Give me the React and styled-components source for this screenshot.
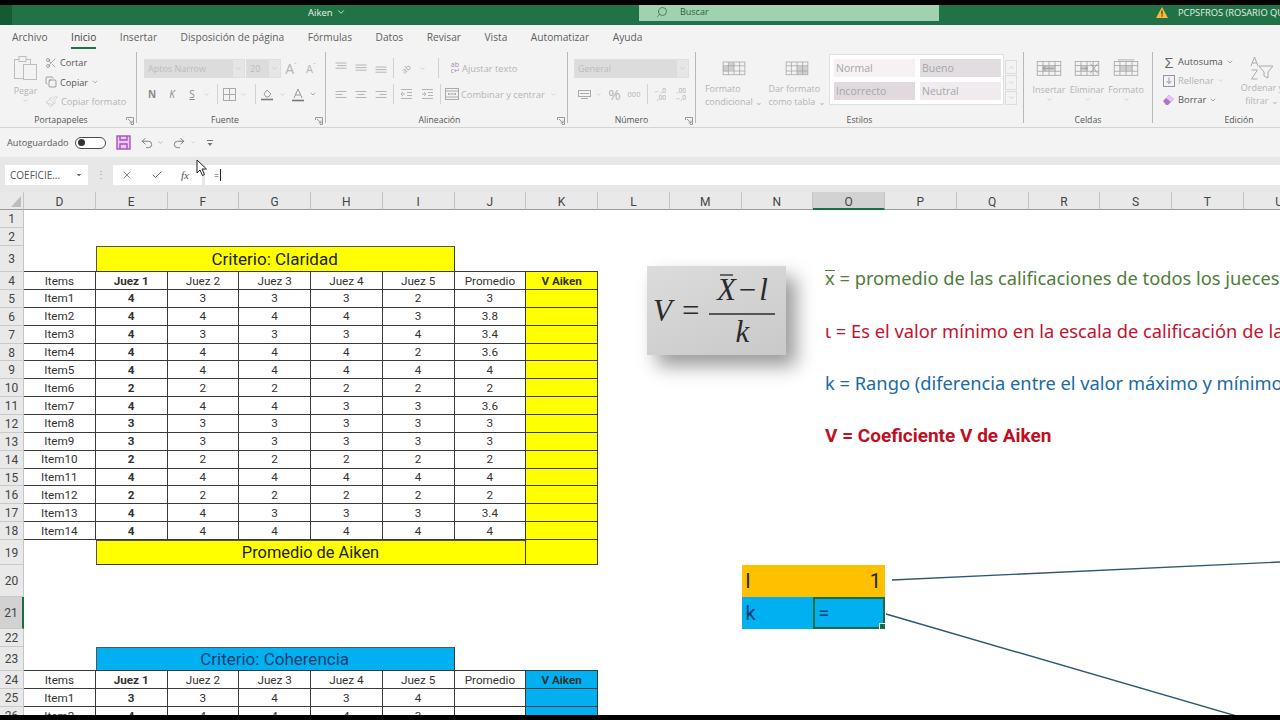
import React from "react";
import styled, { createGlobalStyle } from "styled-components";
import { Scissors, Copy, Paintbrush, Search, ChevronDown, X, Check, Undo2, Redo2 } from "lucide-react";

const Global = createGlobalStyle`
  html, body { margin: 0; padding: 0; background: #000; overflow: hidden; }
  #root { width: 1280px; height: 720px; overflow: hidden; }
  * { box-sizing: border-box; }
`;

const UI = `"Open Sans", "Noto Sans", sans-serif`;
const CELL = `Roboto, "Liberation Sans", sans-serif`;
const DIS = "#b4b4b4";

const Page = styled.div`
  position: relative;
  width: 1280px;
  height: 720px;
  padding: 5px 0;
  background: #000;
  display: flex;
  flex-direction: column;
  overflow: hidden;
  font-family: ${UI};
`;

/* ---------- title bar ---------- */
const TitleBar = styled.header`
  height: 20px;
  flex: none;
  background: #217346;
  display: flex;
  align-items: flex-start;
  color: #fff;
  font-size: 9.5px;
  overflow: hidden;
`;
const TitleCorner = styled.div`
  width: 12px;
  height: 20px;
  flex: none;
  background: #135c33;
`;
const DocName = styled.div`
  width: 627px;
  height: 14px;
  flex: none;
  padding: 0 0 0 296px;
  display: flex;
  align-items: center;
  gap: 3px;
  color: #e6f2ea;
`;
const SearchBox = styled.div`
  width: 300px;
  height: 16px;
  flex: none;
  background: #a0d2b0;
  color: #2f5f44;
  display: flex;
  align-items: center;
  padding: 0 0 3px 17px;
  gap: 12px;
  font-size: 9px;
`;
const Account = styled.div`
  margin-left: 217px;
  display: flex;
  flex: none;
  align-items: center;
  gap: 10px;
  white-space: nowrap;
  color: #e4efe8;
  font-size: 9.3px;
  height: 14px;
`;

/* ---------- tabs ---------- */
const TabBar = styled.nav`
  height: 25px;
  flex: none;
  background: #f3f3f3;
  display: flex;
  padding-left: 12px;
  gap: 23.5px;
  font-size: 10.2px;
  color: #5a5a5a;
`;
const Tab = styled.div`
  height: 22px;
  margin-top: 2px;
  display: flex;
  align-items: center;
  white-space: nowrap;
  border-bottom: 2px solid ${(p) => (p.$active ? "#217346" : "transparent")};
  color: ${(p) => (p.$active ? "#444" : "#5f5f5f")};
`;

/* ---------- ribbon ---------- */
const Ribbon = styled.section`
  height: 78px;
  flex: none;
  background: #f3f3f3;
  display: flex;
  overflow: hidden;
  border-bottom: 1px solid #d4d4d4;
`;
const Group = styled.div`
  position: relative;
  width: ${(p) => p.$w}px;
  flex: none;
  display: flex;
  flex-direction: column;
`;
const GroupBody = styled.div`
  height: 64px;
  flex: none;
  display: flex;
  padding: ${(p) => p.$pt ?? 8}px 0 0 ${(p) => p.$pl ?? 0}px;
  flex-direction: ${(p) => (p.$col ? "column" : "row")};
`;
const GroupLabel = styled.div`
  height: 13px;
  text-align: center;
  font-size: 8.7px;
  line-height: 13px;
  color: #555;
  padding-right: ${(p) => p.$pr ?? 0}px;
  white-space: nowrap;
`;
const Launcher = styled.svg`
  position: absolute;
  right: 2px;
  bottom: 2px;
  width: 8px;
  height: 8px;
`;
const Divider = styled.div`
  width: 1px;
  flex: none;
  margin: 2px 0 4px;
  background: #b8b8b8;
`;
const Row = styled.div`
  display: flex;
  align-items: center;
  height: 20px;
  margin-bottom: ${(p) => p.$mb ?? 0}px;
`;
const Slot = styled.div`
  width: ${(p) => p.$w}px;
  margin-left: ${(p) => p.$ml ?? 0}px;
  flex: none;
  height: 20px;
  display: flex;
  align-items: center;
  justify-content: center;
  color: ${(p) => p.$c ?? DIS};
  font-size: ${(p) => p.$fs ?? 11}px;
  font-weight: ${(p) => p.$fw ?? 400};
  font-style: ${(p) => (p.$it ? "italic" : "normal")};
  text-decoration: ${(p) => (p.$ul ? "underline" : "none")};
  white-space: nowrap;
`;
const SizeHat = styled.span`
  font-size: 7px;
  margin: -5px 0 0 0;
`;
const Sep = styled.div`
  width: ${(p) => p.$w}px;
  height: 20px;
  flex: none;
  display: flex;
  justify-content: center;
  &::before { content: ""; width: 1px; background: #d2d2d2; }
`;
const Select = styled.div`
  width: ${(p) => p.$w}px;
  height: 19px;
  margin-right: ${(p) => p.$mr ?? 0}px;
  flex: none;
  background: #dcdcdc;
  border: 1px solid #dedede;
  color: #bcbcbc;
  font-size: 9px;
  padding-left: 3px;
  display: flex;
  align-items: center;
  justify-content: space-between;
  overflow: hidden;
  white-space: nowrap;
`;
const SelectArrow = styled.span`
  width: 11px;
  height: 19px;
  background: #e6e6e6;
  color: #b0b0b0;
  display: flex;
  align-items: center;
  justify-content: center;
  flex: none;
`;
const Disabled = styled.span`
  color: ${DIS};
  font-size: 9.3px;
  white-space: nowrap;
`;
const StackDigits = styled.div`
  display: flex;
  flex-direction: column;
  align-items: flex-end;
  font-size: 6.5px;
  line-height: 7px;
  color: #aaa;
`;
const WrapGlyph = styled.div`
  display: flex;
  flex-direction: column;
  font-size: 7px;
  line-height: 6px;
  color: #a58ab5;
`;
const SlantGlyph = styled.span`
  font-size: 8px;
  color: #aaa;
  transform: rotate(-40deg);
  display: inline-block;
`;
const PasteCol = styled.div`
  width: 39px;
  margin-left: 6px;
  flex: none;
  display: flex;
  flex-direction: column;
  align-items: center;
  color: ${DIS};
  font-size: 8.8px;
`;
const PasteWord = styled.div`
  margin-top: 4px;
`;
const ClipRow = styled.div`
  height: 19.5px;
  display: flex;
  align-items: center;
  gap: 3px;
  font-size: 9.2px;
  color: ${(p) => (p.$off ? DIS : "#555")};
  white-space: nowrap;
`;
const ClipCol = styled.div`
  display: flex;
  flex-direction: column;
  margin-top: -2px;
`;
const BigBtn = styled.div`
  width: ${(p) => p.$w}px;
  flex: none;
  display: flex;
  flex-direction: column;
  align-items: center;
  color: ${DIS};
  font-size: 9px;
  line-height: 13px;
  white-space: nowrap;
  margin-top: ${(p) => p.$mt ?? 0}px;
`;
const BigIcon = styled.div`
  height: 24px;
  margin-bottom: ${(p) => p.$mb ?? 0}px;
  display: flex;
  align-items: center;
  justify-content: center;
`;
const Gallery = styled.div`
  width: 175px;
  height: 51px;
  margin-left: -1px;
  background: #fff;
  border: 1px solid #dfdfdf;
  padding: 4px;
  display: grid;
  grid-template-columns: 81px 81px;
  grid-template-rows: 18px 18px;
  gap: 5px;
  flex: none;
`;
const StyleCell = styled.div`
  background: ${(p) => p.$bg};
  color: #a9a5a8;
  font-size: 10.5px;
  padding: 0 0 1px 2px;
  display: flex;
  align-items: center;
`;
const GalleryScroll = styled.div`
  width: 12px;
  height: 45px;
  margin: 6px 0 0 1px;
  flex: none;
  display: grid;
  grid-template-rows: 1fr 1fr 1fr;
  gap: 1px;
  color: #b9b9b9;
`;
const ScrollBtn = styled.div`
  border: 1px solid #dcdcdc;
  display: flex;
  align-items: center;
  justify-content: center;
`;
const EditCol = styled.div`
  width: 73px;
  flex: none;
  display: flex;
  flex-direction: column;
  margin-top: -5px;
`;
const EditRow = styled.div`
  height: 19px;
  display: flex;
  align-items: center;
  gap: 3px;
  font-size: 9.4px;
  white-space: nowrap;
  color: ${(p) => (p.$off ? DIS : "#555")};
`;

/* ---------- quick access ---------- */
const Qat = styled.div`
  height: 29px;
  flex: none;
  background: #f3f3f3;
  display: flex;
  align-items: center;
  padding-left: 7px;
  color: #5a5a5a;
  font-size: 9.2px;
`;
const Toggle = styled.div`
  width: 31px;
  height: 12px;
  border: 1px solid #4a4a4a;
  border-radius: 6px;
  margin: 0 10px 0 6px;
  background: #fff;
  display: flex;
  align-items: center;
  padding-left: 2px;
  &::before { content: ""; width: 7px; height: 7px; border-radius: 50%; background: #333; }
`;

/* ---------- formula bar ---------- */
const FormulaBar = styled.div`
  height: 35px;
  flex: none;
  background: #e7e7e7;
  display: flex;
  padding: 8px 0 7px 5px;
  align-items: stretch;
`;
const NameBox = styled.div`
  width: 83px;
  background: #fff;
  color: #555;
  font-size: 10px;
  padding: 0 5px;
  display: flex;
  align-items: center;
  justify-content: space-between;
`;
const Grip = styled.div`
  width: 25px;
  color: #a0a0a0;
  text-align: center;
  font-size: 10px;
  line-height: 19px;
`;
const FxBox = styled.div`
  width: 89px;
  background: #fff;
  display: flex;
  align-items: center;
  padding-left: 8px;
  gap: 18px;
  color: #666;
`;
const FxMark = styled.span`
  font-family: "Liberation Serif", serif;
  font-style: italic;
  font-size: 11px;
  color: #555;
`;
const FormulaInput = styled.div`
  flex: 1;
  margin-left: 3px;
  background: #fff;
  display: flex;
  align-items: center;
  padding-left: 9px;
  font-size: 9px;
  color: #555;
`;
const Caret = styled.span`
  width: 1px;
  height: 12px;
  background: #222;
  margin-left: 1px;
`;

/* ---------- sheet ---------- */
const rowHeights = [18, 18, 26, 18];
for (let i = 0; i < 14; i++) rowHeights.push(17.87);
rowHeights.push(25, 32, 32, 18, 24, 18, 18, 18);

const Sheet = styled.main`
  position: relative;
  flex: 1;
  min-height: 0;
  background: #fff;
  overflow: hidden;
  display: grid;
  grid-template-columns: 24px repeat(18, 71.75px);
  grid-template-rows: 18px ${rowHeights.map((h) => h + "px").join(" ")};
  font-family: ${CELL};
`;
const place = (p) => `
  grid-column: ${p.$c}${p.$cs ? " / span " + p.$cs : ""};
  grid-row: ${p.$r};
`;
const Corner = styled.div`
  grid-column: 1;
  grid-row: 1;
  background: #e9e9e9;
  border-bottom: 1px solid #9a9a9a;
  border-right: 1px solid #c4c4c4;
  display: flex;
  align-items: flex-end;
  justify-content: flex-end;
  padding: 0 2px 2px 0;
`;
const ColHead = styled.div`
  ${place}
  background: ${(p) => (p.$sel ? "#d2d2d2" : "#e9e9e9")};
  border-right: 1px solid #c4c4c4;
  border-bottom: ${(p) => (p.$sel ? "2px solid #1d6b41" : "1px solid #9a9a9a")};
  color: #444;
  font-size: 12px;
  padding-top: 3px;
  display: flex;
  align-items: center;
  justify-content: center;
`;
const RowHead = styled.div`
  ${place}
  background: ${(p) => (p.$sel ? "#d2d2d2" : "#e9e9e9")};
  border-right: ${(p) => (p.$sel ? "2px solid #1d6b41" : "1px solid #c4c4c4")};
  border-bottom: 1px solid #c9c9c9;
  color: #444;
  font-size: 12px;
  padding-top: 1px;
  display: flex;
  align-items: center;
  justify-content: center;
`;
const Cell = styled.div`
  ${place}
  display: flex;
  align-items: center;
  justify-content: center;
  font-size: 11.7px;
  color: #333;
  white-space: nowrap;
  font-weight: ${(p) => (p.$b ? 700 : 400)};
  background: ${(p) => p.$bg ?? "transparent"};
  border-right: 1px solid #3a3a3a;
  border-bottom: 1px solid #3a3a3a;
  box-shadow: ${(p) => (p.$top ? "0 -1px 0 #3a3a3a" : "none")};
`;
const BannerCell = styled(Cell)`
  font-size: ${(p) => p.$fs}px;
  font-weight: 400;
  padding-top: 1px;
  color: ${(p) => p.$fg ?? "#222"};
  box-shadow: inset 0 1px 0 #555, inset 1px 0 0 #555;
`;
const InfoCell = styled.div`
  ${place}
  background: ${(p) => p.$bg};
  display: flex;
  align-items: center;
  justify-content: ${(p) => (p.$right ? "flex-end" : "flex-start")};
  padding: 0 4px;
  font-size: 20px;
  color: ${(p) => p.$fg ?? "#222"};
`;
const ActiveCell = styled(InfoCell)`
  position: relative;
  border: 2px solid #1d6b41;
  font-size: 20px;
  padding: 0 3px;
  z-index: 1;
  color: #123f70;
  &::after {
    content: "";
    position: absolute;
    right: -3px;
    bottom: -3px;
    width: 5px;
    height: 5px;
    background: #1d6b41;
    border: 1px solid #fff;
  }
`;

/* floating objects over the sheet */
const FormulaCard = styled.div`
  position: absolute;
  left: 647px;
  top: 74px;
  width: 139px;
  height: 89px;
  background: linear-gradient(160deg, #dcdcdc, #c9c9c9);
  box-shadow: 10px 11px 18px rgba(0, 0, 0, 0.4);
  display: flex;
  align-items: center;
  padding-left: 6px;
  font-family: "Liberation Serif", serif;
  font-size: 31px;
  font-style: italic;
  color: #2a2a2a;
  gap: 10px;
  z-index: 2;
`;
const Fraction = styled.div`
  display: flex;
  flex-direction: column;
  align-items: center;
  width: 66px;
  line-height: 34px;
`;
const Num = styled.div`
  border-bottom: 2px solid #555;
  width: 100%;
  display: flex;
  justify-content: center;
  gap: 3px;
  white-space: nowrap;
  height: 42px;
`;
const Upright = styled.span`
  font-style: normal;
`;
const Xbar = styled.span`
  position: relative;
  &::before {
    content: "";
    position: absolute;
    left: 3px;
    right: 3px;
    top: 1px;
    height: 2px;
    background: #666;
  }
`;
const Legend = styled.div`
  position: absolute;
  left: 825px;
  top: 75px;
  display: flex;
  flex-direction: column;
  gap: 30.5px;
  font-family: "Noto Sans", sans-serif;
  line-height: 22px;
  white-space: nowrap;
  z-index: 2;
`;
const LegendLine = styled.div`
  color: ${(p) => p.$c};
  font-weight: ${(p) => (p.$b ? 700 : 400)};
  font-family: ${(p) => (p.$b ? `Roboto, sans-serif` : "inherit")};
  font-size: ${(p) => (p.$b ? 19 : 18.3)}px;
`;
const XSym = styled.span`
  border-top: 1px solid currentColor;
  line-height: 14px;
  display: inline-block;
`;
const Connectors = styled.svg`
  position: absolute;
  left: 0;
  top: 0;
  width: 1280px;
  height: 523px;
  pointer-events: none;
  z-index: 2;
`;
const Pointer = styled.svg`
  position: absolute;
  left: 196px;
  top: 159px;
  width: 12px;
  height: 18px;
  z-index: 5;
`;

/* ---------- icons ---------- */
const Chev = ({ s = 8, c }) => <ChevronDown size={s} strokeWidth={1.6} color={c ?? DIS} />;

const Lines = ({ a = "left" }) => {
  const widths = [11, 7, 11];
  return (
    <svg width="12" height="12" viewBox="0 0 12 12" stroke={DIS} strokeWidth="1">
      {widths.map((w, i) => {
        const x = a === "left" ? 0.5 : a === "right" ? 11.5 - w : 6 - w / 2;
        return <line key={i} x1={x} x2={x + w} y1={3 + i * 3 + 0.5} y2={3 + i * 3 + 0.5} />;
      })}
    </svg>
  );
};
const LinesTight = ({ v }) => {
  const top = v === 0 ? 1 : v === 1 ? 3 : 5;
  return (
    <svg width="12" height="12" viewBox="0 0 12 12" stroke={DIS}>
      {[0, 1, 2].map((i) => (
        <line key={i} x1={i === 1 && v === 0 ? 2 : 0.5} x2={11.5} y1={top + i * 2.6} y2={top + i * 2.6} />
      ))}
    </svg>
  );
};
const Indent = ({ out }) => (
  <svg width="13" height="12" viewBox="0 0 13 12" stroke={DIS}>
    {[1, 4, 7, 10].map((y, i) => (
      <line key={y} x1={i === 1 || i === 2 ? 7 : 1} x2="12" y1={y + 0.5} y2={y + 0.5} />
    ))}
    <path d={out ? "M5 6H1M3 4L1 6l2 2" : "M1 6h4M3 4l2 2-2 2"} fill="none" />
  </svg>
);
const GridIcon = ({ w = 32, h = 20, shade = [], top, mark, c = "#a3a3a3" }) => (
  <svg width={w} height={h} viewBox="0 -1 32 21" fill="none" stroke={c}>
    {shade.map(([x, y, sw, sh], i) => (
      <rect key={i} x={x} y={y} width={sw} height={sh} fill="#cfcfcf" stroke="none" />
    ))}
    <rect x="1.5" y="1.5" width="29" height="17" />
    {[8.5, 16, 23.5].map((x) => <line key={x} x1={x} x2={x} y1="1.5" y2="18.5" />)}
    {[6.5, 13.5].map((y) => <line key={y} x1="1.5" x2="30.5" y1={y} y2={y} />)}
    {top && <line x1="6" x2="26" y1="-0.5" y2="-0.5" />}
    {mark === "ins" && <path d="M8 10h14M8 10l4-3M8 10l4 3" fill="#cfcfcf" strokeWidth="1.4" />}
    {mark === "del" && <path d="M20 4l9 12M29 4l-9 12M8 10h9M17 10l-3-2M17 10l-3 2" strokeWidth="1.2" />}
  </svg>
);
const LaunchIcon = () => (
  <Launcher viewBox="0 0 8 8" fill="none" stroke="#9a9a9a">
    <path d="M.5 3V.5h7v7H5M2 2l4 4M6 3.5V6H3.5" />
  </Launcher>
);

const tabs = ["Archivo", "Inicio", "Insertar", "Disposición de página", "Fórmulas", "Datos", "Revisar", "Vista", "Automatizar", "Ayuda"];

/* ---------- data ---------- */
const tableA = [
  ["Item1", 4, 3, 3, 3, 2, "3"],
  ["Item2", 4, 4, 4, 4, 3, "3.8"],
  ["Item3", 4, 3, 3, 3, 4, "3.4"],
  ["Item4", 4, 4, 4, 4, 2, "3.6"],
  ["Item5", 4, 4, 4, 4, 4, "4"],
  ["Item6", 2, 2, 2, 2, 2, "2"],
  ["Item7", 4, 4, 4, 3, 3, "3.6"],
  ["Item8", 3, 3, 3, 3, 3, "3"],
  ["Item9", 3, 3, 3, 3, 3, "3"],
  ["Item10", 2, 2, 2, 2, 2, "2"],
  ["Item11", 4, 4, 4, 4, 4, "4"],
  ["Item12", 2, 2, 2, 2, 2, "2"],
  ["Item13", 4, 4, 3, 3, 3, "3.4"],
  ["Item14", 4, 4, 4, 4, 4, "4"],
];
const tableB = [
  ["Item1", 3, 3, 4, 3, 4, ""],
  ["Item2", 4, 4, 4, 4, 3, ""],
];
const headers = ["Items", "Juez 1", "Juez 2", "Juez 3", "Juez 4", "Juez 5", "Promedio", "V Aiken"];
const colLetters = "DEFGHIJKLMNOPQRSTU".split("");
const YELLOW = "#ffff00";
const BLUE = "#00b0f0";

function DataTable({ start, rows, accent }) {
  const out = [];
  headers.forEach((h, i) => {
    out.push(
      <Cell key={"h" + i} $top $c={i + 2} $r={start} $b={i === 1 || i === 7} $bg={i === 7 ? accent : undefined}>
        {h}
      </Cell>
    );
  });
  rows.forEach((r, ri) => {
    r.forEach((v, ci) => out.push(
      <Cell key={ri + "-" + ci} $c={ci + 2} $r={start + ri + 1} $b={ci === 1}>{v}</Cell>
    ));
    out.push(<Cell key={ri + "-k"} $c={9} $r={start + ri + 1} $bg={accent} />);
  });
  return out;
}

export default function App() {
  return (
    <Page>
      <Global />
      <TitleBar>
        <TitleCorner />
        <DocName>Aiken <ChevronDown size={10} /></DocName>
        <SearchBox><Search size={12} strokeWidth={1.4} style={{ transform: "scaleX(-1)" }} />Buscar</SearchBox>
        <Account>
          <svg width="12" height="11" viewBox="0 0 12 11">
            <path d="M6 0l6 11H0z" fill="#f4b942" />
            <rect x="5.4" y="3.5" width="1.2" height="4" fill="#4a3200" />
            <rect x="5.4" y="8.3" width="1.2" height="1.2" fill="#4a3200" />
          </svg>
          PCPSFROS (ROSARIO QUISPE)
        </Account>
      </TitleBar>

      <TabBar>
        {tabs.map((t) => <Tab key={t} $active={t === "Inicio"}>{t}</Tab>)}
      </TabBar>

      <Ribbon>
        {/* Portapapeles */}
        <Group $w={136}>
          <GroupBody $pt={5}>
            <PasteCol>
              <svg width="26" height="26" viewBox="0 0 26 26" fill="none" stroke="#bdbdbd">
                <rect x="1.5" y="4.5" width="16" height="19" />
                <rect x="6" y="1.5" width="7" height="5" fill="#f3f3f3" />
                <rect x="10.5" y="9.5" width="13" height="15" fill="#f3f3f3" />
              </svg>
              <PasteWord>Pegar</PasteWord>
              <Chev s={7} />
            </PasteCol>
            <ClipCol>
              <ClipRow><Scissors size={12} color="#777" strokeWidth={1.2} />Cortar</ClipRow>
              <ClipRow><Copy size={12} color="#666" strokeWidth={1.2} />Copiar <Chev s={8} c="#777" /></ClipRow>
              <ClipRow $off><Paintbrush size={13} color="#c4c4c4" strokeWidth={1.2} />Copiar formato</ClipRow>
            </ClipCol>
          </GroupBody>
          <GroupLabel $pr={14}>Portapapeles</GroupLabel>
          <LaunchIcon />
        </Group>
        <Divider />

        {/* Fuente */}
        <Group $w={188}>
          <GroupBody $col $pl={7} $pt={8}>
            <Row $mb={6}>
              <Select $w={101} $mr={1}>Aptos Narrow<SelectArrow><Chev s={7} /></SelectArrow></Select>
              <Select $w={35}>20<SelectArrow><Chev s={7} /></SelectArrow></Select>
              <Slot $w={20} $fs={14}>A<SizeHat>ˆ</SizeHat></Slot>
              <Slot $w={20} $fs={11}>A<SizeHat>ˇ</SizeHat></Slot>
            </Row>
            <Row>
              <Slot $w={16} $fw={700} $fs={10} $c="#8a8a8a">N</Slot>
              <Slot $w={24} $fs={10} $c="#8a8a8a" $it>K</Slot>
              <Slot $w={16} $fs={10} $c="#8a8a8a" $ul>S</Slot>
              <Slot $w={12}><Chev s={7} /></Slot>
              <Sep $w={10} />
              <Slot $w={14}>
                <svg width="13" height="13" viewBox="0 0 13 13" fill="none" stroke="#aaa"><rect x=".5" y=".5" width="12" height="12" /><path d="M6.5.5v12M.5 6.5h12" /></svg>
              </Slot>
              <Slot $w={14}><Chev s={7} /></Slot>
              <Sep $w={10} />
              <Slot $w={14}>
                <svg width="14" height="14" viewBox="0 0 14 14" fill="none" stroke="#9a9a9a">
                  <path d="M4 7l3-4 4 4-3 3H6z" />
                  <line x1="1" x2="13" y1="12.5" y2="12.5" stroke="#777" strokeWidth="1.6" />
                </svg>
              </Slot>
              <Slot $w={16}><Chev s={7} /></Slot>
              <Slot $w={16} $fs={11} $c="#999">
                <svg width="14" height="15" viewBox="0 0 14 15" fill="none" stroke="#999">
                  <path d="M3 11L7 2l4 9M4.5 8h5" />
                  <line x1="1" x2="13" y1="13.5" y2="13.5" stroke="#777" strokeWidth="1.6" />
                </svg>
              </Slot>
              <Slot $w={14}><Chev s={8} c="#666" /></Slot>
            </Row>
          </GroupBody>
          <GroupLabel $pr={12}>Fuente</GroupLabel>
          <LaunchIcon />
        </Group>
        <Divider />

        {/* Alineación */}
        <Group $w={241}>
          <GroupBody $col $pl={5} $pt={8}>
            <Row $mb={6}>
              <Slot $w={20}><LinesTight v={0} /></Slot>
              <Slot $w={20}><LinesTight v={1} /></Slot>
              <Slot $w={20}><LinesTight v={2} /></Slot>
              <Sep $w={4} />
              <Slot $w={22}><SlantGlyph>ab</SlantGlyph></Slot>
              <Slot $w={10}><Chev s={7} /></Slot>
              <Sep $w={22} />
              <Slot $w={13}><WrapGlyph><span>ab</span><span>c↵</span></WrapGlyph></Slot>
              <Disabled>Ajustar texto</Disabled>
            </Row>
            <Row>
              <Slot $w={20}><Lines a="left" /></Slot>
              <Slot $w={20}><Lines a="center" /></Slot>
              <Slot $w={20}><Lines a="right" /></Slot>
              <Sep $w={4} />
              <Slot $w={22}><Indent out /></Slot>
              <Slot $w={20}><Indent /></Slot>
              <Sep $w={6} />
              <Slot $w={18}>
                <svg width="14" height="12" viewBox="0 0 14 12" fill="none" stroke="#aaa">
                  <rect x=".5" y=".5" width="13" height="11" />
                  <path d="M.5 3h13M.5 9h13M3 6h8M4 5L3 6l1 1M10 5l1 1-1 1" />
                </svg>
              </Slot>
              <Disabled>Combinar y centrar</Disabled>
              <Slot $w={18}><Chev s={7} /></Slot>
            </Row>
          </GroupBody>
          <GroupLabel $pr={14}>Alineación</GroupLabel>
          <LaunchIcon />
        </Group>
        <Divider />

        {/* Número */}
        <Group $w={127}>
          <GroupBody $col $pl={6} $pt={8}>
            <Row $mb={6}>
              <Select $w={115}>General<SelectArrow><Chev s={7} /></SelectArrow></Select>
            </Row>
            <Row>
              <Slot $w={20}>
                <svg width="13" height="12" viewBox="0 0 13 12" fill="none" stroke="#aaa">
                  <rect x=".5" y="2.5" width="12" height="6" />
                  <path d="M3 10.5h7M2 5.5h9" />
                </svg>
              </Slot>
              <Slot $w={8}><Chev s={7} /></Slot>
              <Slot $w={25} $fs={15}>%</Slot>
              <Slot $w={14} $fs={7.5}>000</Slot>
              <Sep $w={12} />
              <Slot $w={14}><StackDigits><span>←,0</span><span>,00</span></StackDigits></Slot>
              <Slot $w={26}><StackDigits><span>,00</span><span>→,0</span></StackDigits></Slot>
            </Row>
          </GroupBody>
          <GroupLabel>Número</GroupLabel>
          <LaunchIcon />
        </Group>
        <Divider />

        {/* Estilos */}
        <Group $w={327}>
          <GroupBody $pl={8} $pt={4}>
            <BigBtn $w={60} $mt={2}>
              <BigIcon $mb={2}><GridIcon w={24} h={20} shade={[[9, 2, 7, 11], [1, 7, 8, 7]]} /></BigIcon>
              Formato<br />condicional ⌄
            </BigBtn>
            <BigBtn $w={66} $mt={2}>
              <BigIcon $mb={2}><GridIcon w={24} h={20} shade={[[16, 7, 14, 11]]} /></BigIcon>
              Dar formato<br />como tabla ⌄
            </BigBtn>
            <Gallery>
              <StyleCell $bg="#f7f1f4">Normal</StyleCell>
              <StyleCell $bg="#e2dde0">Bueno</StyleCell>
              <StyleCell $bg="#e1d9dd">Incorrecto</StyleCell>
              <StyleCell $bg="#efebee">Neutral</StyleCell>
            </Gallery>
            <GalleryScroll>
              <ScrollBtn><ChevronDown size={7} style={{ transform: "rotate(180deg)" }} /></ScrollBtn>
              <ScrollBtn><ChevronDown size={7} /></ScrollBtn>
              <ScrollBtn><ChevronDown size={7} /></ScrollBtn>
            </GalleryScroll>
          </GroupBody>
          <GroupLabel>Estilos</GroupLabel>
        </Group>
        <Divider />

        {/* Celdas */}
        <Group $w={128}>
          <GroupBody $pl={6} $pt={6}>
            <BigBtn $w={38}>
              <BigIcon $mb={3}><GridIcon w={26} h={18} shade={[[8, 7, 16, 6]]} mark="ins" /></BigIcon>
              Insertar<Chev s={7} />
            </BigBtn>
            <BigBtn $w={38}>
              <BigIcon $mb={3}><GridIcon w={26} h={18} shade={[[8, 7, 9, 6]]} mark="del" /></BigIcon>
              Eliminar<Chev s={7} />
            </BigBtn>
            <BigBtn $w={40}>
              <BigIcon $mb={3}><GridIcon w={26} h={18} shade={[[8, 7, 16, 6]]} top /></BigIcon>
              Formato<Chev s={7} />
            </BigBtn>
          </GroupBody>
          <GroupLabel>Celdas</GroupLabel>
        </Group>
        <Divider />

        {/* Edición */}
        <Group $w={172}>
          <GroupBody $pl={10} $pt={7}>
            <EditCol>
              <EditRow>
                <Slot $w={12} $fs={15} $c="#666">Σ</Slot>
                Autosuma <Chev s={8} c="#666" />
              </EditRow>
              <EditRow $off>
                <svg width="12" height="12" viewBox="0 0 12 12" fill="none" stroke="#9b8fa8">
                  <rect x=".5" y=".5" width="11" height="11" /><path d="M6 2.5v6M3.5 6L6 8.5 8.5 6" />
                </svg>
                Rellenar <Chev s={7} />
              </EditRow>
              <EditRow>
                <svg width="12" height="12" viewBox="0 0 12 12">
                  <path d="M0 7l6-6 5 4-6 6H3z" fill="#b071c9" />
                  <path d="M6 1l5 4-3 3-5-4z" fill="#e4c6ef" />
                </svg>
                Borrar <Chev s={8} c="#555" />
              </EditRow>
            </EditCol>
            <BigBtn $w={52} $mt={-1}>
              <BigIcon $mb={1}>
                <svg width="25" height="24" viewBox="0 0 25 24" fill="none" stroke="#aaa">
                  <path d="M1 10L4.5 1 8 10M2.2 7h4.6M1.5 14h6L1.5 23h6" />
                  <path d="M9 10h14l-5 6v6l-4-2v-4z" />
                </svg>
              </BigIcon>
              Ordenar y<span>filtrar ⌄</span>
            </BigBtn>
          </GroupBody>
          <GroupLabel>Edición</GroupLabel>
        </Group>
      </Ribbon>

      <Qat>
        Autoguardado
        <Toggle />
        <svg width="15" height="15" viewBox="0 0 15 15" fill="#e9c9f0" stroke="#a84fc0" strokeWidth="1.4">
          <rect x="1" y="1" width="13" height="13" />
          <path d="M4 1v4h7V1M4 14V9h7v5" fill="none" />
        </svg>
        <Slot $w={16} $ml={8} $c="#555"><Undo2 size={14} strokeWidth={1.2} /></Slot>
        <Slot $w={12}><Chev s={7} c="#777" /></Slot>
        <Slot $w={24} $c="#555"><Redo2 size={14} strokeWidth={1.2} /></Slot>
        <Slot $w={4}><Chev s={7} c="#777" /></Slot>
        <Slot $w={30}>
          <svg width="8" height="8" viewBox="0 0 8 8" stroke="#777" fill="#777">
            <path d="M1 1.5h6" fill="none" />
            <path d="M1.5 4h5L4 7z" stroke="none" />
          </svg>
        </Slot>
      </Qat>

      <FormulaBar>
        <NameBox>COEFICIE...<ChevronDown size={8} fill="#666" color="#666" /></NameBox>
        <Grip>⋮</Grip>
        <FxBox>
          <X size={12} strokeWidth={1.4} color="#555" />
          <Check size={12} strokeWidth={2} color="#666" />
          <FxMark>fx</FxMark>
        </FxBox>
        <FormulaInput>=<Caret /></FormulaInput>
      </FormulaBar>

      <Sheet>
        <Corner>
          <svg width="10" height="11" viewBox="0 0 10 11"><path d="M10 0v11H0z" fill="#bdbdbd" /></svg>
        </Corner>
        {colLetters.map((l, i) => <ColHead key={l} $c={i + 2} $r={1} $sel={l === "O"}>{l}</ColHead>)}
        {rowHeights.map((_, i) => <RowHead key={i} $c={1} $r={i + 2} $sel={i + 1 === 21}>{i + 1}</RowHead>)}

        <DataTable start={5} rows={tableA} accent={YELLOW} />
        <BannerCell $c={3} $cs={5} $r={4} $fs={17} $bg={YELLOW}>Criterio: Claridad</BannerCell>
        <BannerCell $c={3} $cs={6} $r={20} $fs={16.4} $bg={YELLOW}>Promedio de Aiken</BannerCell>
        <Cell $c={9} $r={20} $bg={YELLOW} />

        <InfoCell $c={12} $r={21} $bg="#ffc000">l</InfoCell>
        <InfoCell $c={13} $r={21} $bg="#ffc000" $right>1</InfoCell>
        <InfoCell $c={12} $r={22} $bg={BLUE} $fg="#123f70">k</InfoCell>
        <ActiveCell $c={13} $r={22} $bg={BLUE}>=</ActiveCell>

        <DataTable start={25} rows={tableB} accent={BLUE} />
        <BannerCell $c={3} $cs={5} $r={24} $fs={17} $bg={BLUE} $fg="#123f70">Criterio: Coherencia</BannerCell>

        <FormulaCard>
          V<Upright>=</Upright>
          <Fraction>
            <Num><Xbar>X</Xbar><Upright>−</Upright><span>l</span></Num>
            <div>k</div>
          </Fraction>
        </FormulaCard>

        <Legend>
          <LegendLine $c="#4f7d3a"><XSym>x</XSym> = promedio de las calificaciones de todos los jueces</LegendLine>
          <LegendLine $c="#c4122f">ɩ = Es el valor mínimo en la escala de calificación de la prueba</LegendLine>
          <LegendLine $c="#1a6aa6">k = Rango (diferencia entre el valor máximo y mínimo de la escala)</LegendLine>
          <LegendLine $c="#c00f1f" $b>V = Coeficiente V de Aiken</LegendLine>
        </Legend>

        <Connectors viewBox="0 0 1280 523">
          <line x1="892" y1="388" x2="1280" y2="370" stroke="#2c5a6e" strokeWidth="1.4" />
          <line x1="886" y1="422" x2="1240" y2="525" stroke="#2c5a6e" strokeWidth="1.4" />
        </Connectors>
      </Sheet>

      <Pointer viewBox="0 0 12 18">
        <path d="M1 1v13l3-3 2.5 5.5 2-1L6 10h4.5z" fill="#fff" stroke="#222" strokeWidth="1" />
      </Pointer>
    </Page>
  );
}
